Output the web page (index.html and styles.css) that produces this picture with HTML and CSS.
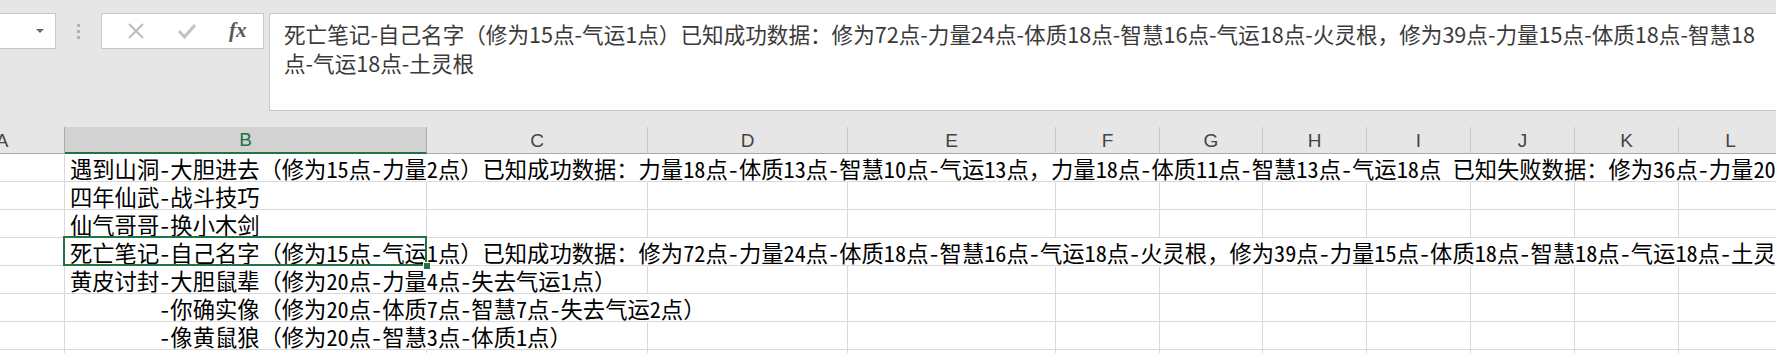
FILE: index.html
```html
<!DOCTYPE html>
<html lang="zh-CN">
<head>
<meta charset="utf-8">
<title>Sheet</title>
<link rel="stylesheet" href="styles.css">
</head>
<body>
<div class="toolbar">
  <div class="namebox"><span class="arrow"></span></div>
  <div class="grip"><i></i><i></i><i></i></div>
  <div class="fbtns">
    <span class="btn">
      <svg width="18" height="18" viewBox="0 0 18 18"><path d="M2 2 L16 16 M16 2 L2 16" stroke="#bcbcbc" stroke-width="2" fill="none"/></svg>
    </span>
    <span class="btn">
      <svg width="20" height="18" viewBox="0 0 20 18"><path d="M2 9 L7.5 15 L18 3" stroke="#c2c2c2" stroke-width="3" fill="none"/></svg>
    </span>
    <span class="btn fx">fx</span>
  </div>
  <div class="formula">死亡笔记-自己名字（修为15点-气运1点）已知成功数据：修为72点-力量24点-体质18点-智慧16点-气运18点-火灵根，修为39点-力量15点-体质18点-智慧18<br>点-气运18点-土灵根</div>
</div>
<div class="sheet">
  <div class="row hdr">
    <div class="c ca">A</div><div class="c cb sel">B</div><div class="c cc">C</div><div class="c cd">D</div><div class="c ce">E</div><div class="c cn">F</div><div class="c cg">G</div><div class="c cn">H</div><div class="c cn">I</div><div class="c cn">J</div><div class="c cn">K</div><div class="c cn">L</div>
  </div>
  <div class="row">
    <div class="c ca"></div><div class="c cb cov"><span class="t">遇到山洞-大胆进去（修为15点-力量2点）已知成功数据：力量18点-体质13点-智慧10点-气运13点，力量18点-体质11点-智慧13点-气运18点 已知失败数据：修为36点-力量20点-体质15点-智慧12点-气运10点</span></div><div class="c cc cov"></div><div class="c cd cov"></div><div class="c ce cov"></div><div class="c cn cov"></div><div class="c cg cov"></div><div class="c cn cov"></div><div class="c cn cov"></div><div class="c cn cov"></div><div class="c cn cov"></div><div class="c cn cov"></div>
  </div>
  <div class="row">
    <div class="c ca"></div><div class="c cb"><span class="t">四年仙武-战斗技巧</span></div><div class="c cc"></div><div class="c cd"></div><div class="c ce"></div><div class="c cn"></div><div class="c cg"></div><div class="c cn"></div><div class="c cn"></div><div class="c cn"></div><div class="c cn"></div><div class="c cn"></div>
  </div>
  <div class="row">
    <div class="c ca"></div><div class="c cb"><span class="t">仙气哥哥-换小木剑</span></div><div class="c cc"></div><div class="c cd"></div><div class="c ce"></div><div class="c cn"></div><div class="c cg"></div><div class="c cn"></div><div class="c cn"></div><div class="c cn"></div><div class="c cn"></div><div class="c cn"></div>
  </div>
  <div class="row">
    <div class="c ca"></div><div class="c cb cov active"><span class="t">死亡笔记-自己名字（修为15点-气运1点）已知成功数据：修为72点-力量24点-体质18点-智慧16点-气运18点-火灵根，修为39点-力量15点-体质18点-智慧18点-气运18点-土灵根</span></div><div class="c cc cov"></div><div class="c cd cov"></div><div class="c ce cov"></div><div class="c cn cov"></div><div class="c cg cov"></div><div class="c cn cov"></div><div class="c cn cov"></div><div class="c cn cov"></div><div class="c cn cov"></div><div class="c cn cov"></div>
  </div>
  <div class="row">
    <div class="c ca"></div><div class="c cb cov"><span class="t">黄皮讨封-大胆鼠辈（修为20点-力量4点-失去气运1点）</span></div><div class="c cc"></div><div class="c cd"></div><div class="c ce"></div><div class="c cn"></div><div class="c cg"></div><div class="c cn"></div><div class="c cn"></div><div class="c cn"></div><div class="c cn"></div><div class="c cn"></div>
  </div>
  <div class="row">
    <div class="c ca"></div><div class="c cb cov"><span class="t">　　　　-你确实像（修为20点-体质7点-智慧7点-失去气运2点）</span></div><div class="c cc cov"></div><div class="c cd"></div><div class="c ce"></div><div class="c cn"></div><div class="c cg"></div><div class="c cn"></div><div class="c cn"></div><div class="c cn"></div><div class="c cn"></div><div class="c cn"></div>
  </div>
  <div class="row">
    <div class="c ca"></div><div class="c cb cov"><span class="t">　　　　-像黄鼠狼（修为20点-智慧3点-体质1点）</span></div><div class="c cc"></div><div class="c cd"></div><div class="c ce"></div><div class="c cn"></div><div class="c cg"></div><div class="c cn"></div><div class="c cn"></div><div class="c cn"></div><div class="c cn"></div><div class="c cn"></div>
  </div>
  <div class="row">
    <div class="c ca"></div><div class="c cb"></div><div class="c cc"></div><div class="c cd"></div><div class="c ce"></div><div class="c cn"></div><div class="c cg"></div><div class="c cn"></div><div class="c cn"></div><div class="c cn"></div><div class="c cn"></div><div class="c cn"></div>
  </div>
</div>
</body>
</html>
```

FILE: styles.css
```css
html, body {
  margin: 0;
  padding: 0;
}
body {
  width: 1776px;
  height: 353px;
  overflow: hidden;
  background: #e6e6e6;
  font-family: "Noto Sans CJK SC", sans-serif;
}

/* ---------- toolbar ---------- */
.toolbar {
  height: 127px;
  box-sizing: border-box;
  padding-top: 13px;
  display: flex;
  align-items: flex-start;
}
.namebox {
  width: 57px;
  height: 36px;
  box-sizing: border-box;
  margin-left: -1px;
  background: #fff;
  border: 1px solid #c6c6c6;
  position: relative;
  display: flex;
  align-items: center;
  justify-content: flex-end;
  padding-right: 11px;
}
.arrow {
  width: 0;
  height: 0;
  border-left: 4px solid transparent;
  border-right: 4px solid transparent;
  border-top: 4px solid #6a6a6a;
}
.grip {
  width: 45px;
  height: 36px;
  display: flex;
  flex-direction: column;
  align-items: center;
  justify-content: center;
  gap: 3px;
}
.grip i {
  display: block;
  width: 3px;
  height: 3px;
  background: #b2b2b2;
}
.fbtns {
  width: 163px;
  height: 36px;
  box-sizing: border-box;
  background: #fff;
  border: 1px solid #c6c6c6;
  display: flex;
  align-items: center;
  padding-left: 9px;
}
.btn {
  width: 54px;
  display: flex;
  justify-content: center;
  align-items: center;
}
.btn.fx {
  font-family: "Liberation Serif", "DejaVu Serif", serif;
  font-style: italic;
  font-weight: bold;
  font-size: 21px;
  color: #595959;
  margin-top: -2px;
}
.formula {
  flex: 1;
  margin-left: 5px;
  margin-right: -2px;
  height: 98px;
  box-sizing: border-box;
  background: #fff;
  border: 1px solid #c6c6c6;
  padding: 5px 0 0 14px;
  font-size: 21.6px;
  line-height: 29px;
  color: #3a3a3a;
  white-space: nowrap;
  overflow: hidden;
}

/* ---------- sheet ---------- */
.sheet {
  margin-left: -60px;
  background: #fff;
}
.row {
  display: flex;
  height: 28px;
}
.row.hdr {
  height: 27px;
  background: #e6e6e6;
}
.c {
  flex: none;
  box-sizing: border-box;
  border-right: 1px solid #d9d9d9;
  border-bottom: 1px solid #d9d9d9;
  position: relative;
  font-family: "Noto Sans Mono CJK SC", "Noto Sans CJK SC", sans-serif;
  font-size: 22.3px;
  line-height: 27px;
  color: #000;
}
.ca { width: 125px; }
.cb { width: 362px; }
.cc { width: 221px; }
.cd { width: 200px; }
.ce { width: 208px; }
.cn { width: 104px; }
.cg { width: 103px; }
.cov { border-right-color: transparent; }

.t {
  display: block;
  white-space: pre;
  padding-left: 5px;
  padding-top: 1px;
}

.hdr .c {
  border-right: 1px solid #c8c8c8;
  border-bottom: 1px solid #a9a9a9;
  font-family: "Liberation Sans", "DejaVu Sans", sans-serif;
  font-size: 19px;
  line-height: 27px;
  color: #444;
  text-align: center;
}
.hdr .c.sel {
  background: #d2d2d2;
  color: #217346;
  border-bottom: 2px solid #217346;
  border-right-color: #ababab;
  line-height: 26px;
}
.hdr .ca { border-right-color: #ababab; }

.active::after {
  content: "";
  position: absolute;
  left: -2px;
  top: -2px;
  right: -1px;
  bottom: -1px;
  border: 2px solid #217346;
  pointer-events: none;
}
.active::before {
  content: "";
  position: absolute;
  right: -5px;
  bottom: -5px;
  width: 6px;
  height: 6px;
  background: #217346;
  border: 1px solid #fff;
  z-index: 2;
}
```
